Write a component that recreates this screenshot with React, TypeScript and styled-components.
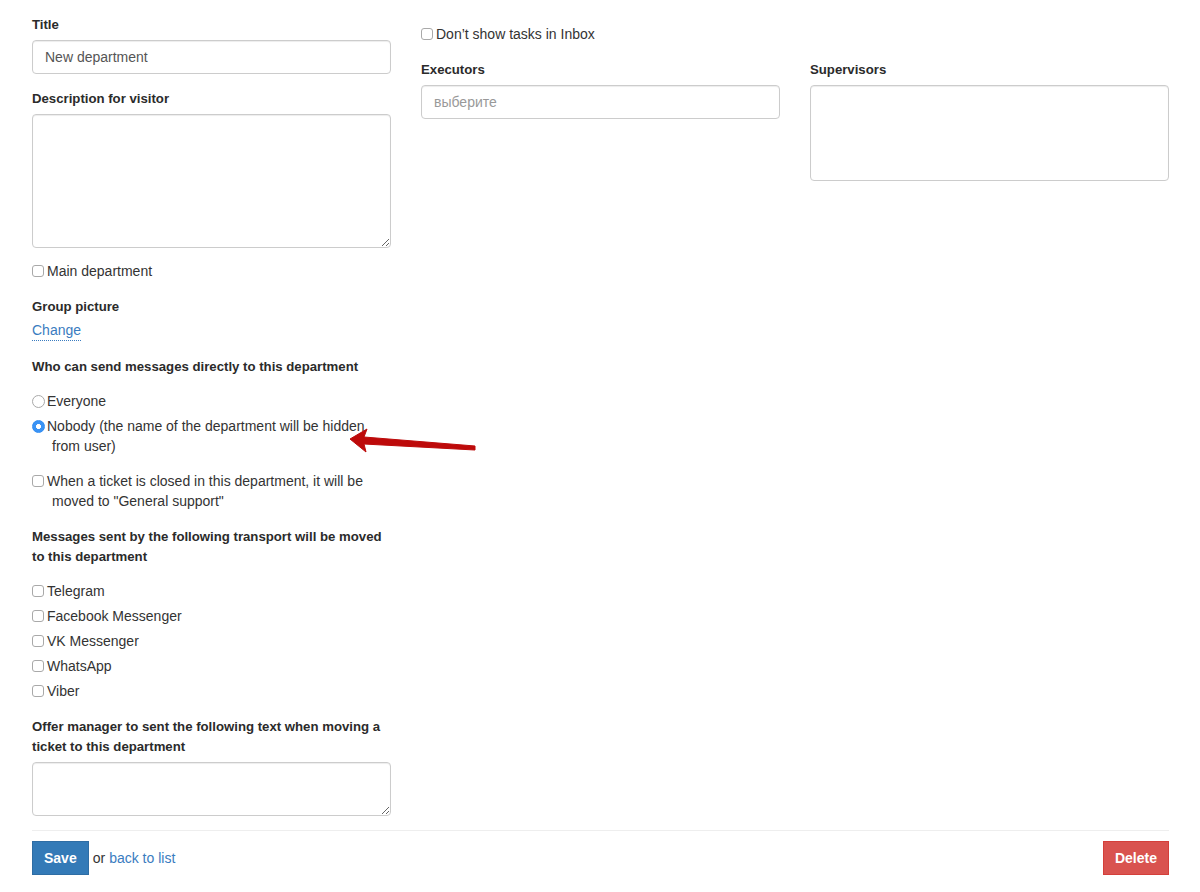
import React from "react";
import styled, { createGlobalStyle } from "styled-components";

const GlobalStyle = createGlobalStyle`
  * { box-sizing: border-box; }
  html, body { margin: 0; padding: 0; background: #fff; }
  body {
    font-family: "Liberation Sans", Arial, sans-serif;
    font-size: 14px;
    line-height: 20px;
    color: #333;
  }
`;

const Page = styled.div`
  position: relative;
  width: 1200px;
  padding: 14px 31px 16px 32px;
`;

const Columns = styled.div`
  display: grid;
  grid-template-columns: 359px 359px 359px;
  column-gap: 30px;
  align-items: start;
`;

const Column = styled.div<{ $top?: number }>`
  display: flex;
  flex-direction: column;
  padding-top: ${(p) => p.$top ?? 0}px;
`;

const Label = styled.div<{ $mb?: number }>`
  font-weight: bold;
  font-size: 13.2px;
  line-height: 20px;
  color: #2b2b2b;
  padding-top: 1px;
  margin-bottom: ${(p) => (p.$mb ?? 6) - 1}px;
`;

const Spacer = styled.div<{ $h: number }>`
  height: ${(p) => p.$h}px;
  flex: none;
`;

const TextInput = styled.input`
  display: block;
  width: 100%;
  height: 34px;
  padding: 6px 12px;
  font-family: "Liberation Sans", Arial, sans-serif;
  font-size: 14px;
  color: #555;
  border: 1px solid #ccc;
  border-radius: 4px;
  box-shadow: inset 0 1px 1px rgba(0, 0, 0, 0.075);
  outline: none;
  &::placeholder { color: #999; }
`;

const TextArea = styled.textarea<{ $h: number }>`
  display: block;
  width: 100%;
  height: ${(p) => p.$h}px;
  padding: 6px 12px;
  font-family: "Liberation Sans", Arial, sans-serif;
  font-size: 14px;
  color: #555;
  border: 1px solid #ccc;
  border-radius: 4px;
  box-shadow: inset 0 1px 1px rgba(0, 0, 0, 0.075);
  outline: none;
  resize: vertical;
`;

const SelectBox = styled.div<{ $h: number }>`
  width: 100%;
  height: ${(p) => p.$h}px;
  border: 1px solid #ccc;
  border-radius: 4px;
  box-shadow: inset 0 1px 1px rgba(0, 0, 0, 0.075);
`;

const OptionLabel = styled.label`
  display: block;
  padding-left: 20px;
  text-indent: -20px;
  line-height: 20px;
  font-size: 14px;
  color: #333;
  cursor: pointer;
`;

const Check = styled.input.attrs({ type: "checkbox" })`
  appearance: none;
  -webkit-appearance: none;
  display: inline-block;
  width: 12px;
  height: 12px;
  margin: 0 3px 0 0;
  border: 1px solid #a9a9a9;
  border-radius: 3px;
  background: #fff;
  vertical-align: -1px;
  text-indent: 0;
`;

const Radio = styled.input.attrs({ type: "radio" })`
  appearance: none;
  -webkit-appearance: none;
  display: inline-block;
  width: 13px;
  height: 13px;
  margin: 0 2px 0 0;
  border: 1px solid #a9a9a9;
  border-radius: 50%;
  background: #fff;
  vertical-align: -2px;
  &:checked {
    border-color: #2f8cf2;
    background: radial-gradient(circle, #fff 0 2.2px, #3a93f5 2.8px);
  }
`;

const ChangeLink = styled.a`
  align-self: flex-start;
  color: #3a7cc0;
  text-decoration: none;
  line-height: 19px;
  border-bottom: 1px dotted #3a7cc0;
  font-size: 14px;
`;

const Divider = styled.div`
  border-top: 1px solid #eee;
  margin-top: 14px;
`;

const Footer = styled.div`
  display: flex;
  align-items: center;
  justify-content: space-between;
  margin-top: 10px;
`;

const FooterLeft = styled.div`
  display: flex;
  align-items: center;
  gap: 4px;
`;

const Button = styled.button<{ $variant: "primary" | "danger" }>`
  height: 34px;
  padding: 6px 11px;
  font-family: "Liberation Sans", Arial, sans-serif;
  font-size: 14px;
  font-weight: bold;
  color: #fff;
  border-radius: 0;
  cursor: pointer;
  background: ${(p) => (p.$variant === "primary" ? "#337ab7" : "#d9534f")};
  border: 1px solid ${(p) => (p.$variant === "primary" ? "#2e6da4" : "#d43f3a")};
`;

const OrText = styled.span`
  color: #333;
  font-size: 14px;
`;

const BackLink = styled.a`
  color: #3a7cc0;
  text-decoration: none;
  font-size: 14px;
`;

const ArrowOverlay = styled.svg`
  position: absolute;
  left: 340px;
  top: 420px;
  pointer-events: none;
`;

const transports = ["Telegram", "Facebook Messenger", "VK Messenger", "WhatsApp", "Viber"];

export default function App() {
  return (
    <>
      <GlobalStyle />
      <Page>
        <Columns>
          <Column>
            <Label>Title</Label>
            <TextInput defaultValue="New department" />
            <Spacer $h={14} />
            <Label>Description for visitor</Label>
            <TextArea $h={134} />
            <Spacer $h={13} />
            <OptionLabel>
              <Check />Main department
            </OptionLabel>
            <Spacer $h={15} />
            <Label $mb={5}>Group picture</Label>
            <ChangeLink href="#">Change</ChangeLink>
            <Spacer $h={15} />
            <Label $mb={15}>Who can send messages directly to this department</Label>
            <OptionLabel>
              <Radio name="who" />Everyone
            </OptionLabel>
            <Spacer $h={5} />
            <OptionLabel>
              <Radio name="who" defaultChecked />Nobody (the name of the department will be hidden from user)
            </OptionLabel>
            <Spacer $h={15} />
            <OptionLabel>
              <Check />When a ticket is closed in this department, it will be moved to "General support"
            </OptionLabel>
            <Spacer $h={15} />
            <Label $mb={15}>Messages sent by the following transport will be moved to this department</Label>
            {transports.map((t, i) => (
              <React.Fragment key={t}>
                {i > 0 && <Spacer $h={5} />}
                <OptionLabel>
                  <Check />{t}
                </OptionLabel>
              </React.Fragment>
            ))}
            <Spacer $h={15} />
            <Label>Offer manager to sent the following text when moving a ticket to this department</Label>
            <TextArea $h={54} />
          </Column>
          <Column $top={10}>
            <OptionLabel>
              <Check />Don’t show tasks in Inbox
            </OptionLabel>
            <Spacer $h={15} />
            <Label>Executors</Label>
            <TextInput placeholder="выберите" />
          </Column>
          <Column $top={45}>
            <Label>Supervisors</Label>
            <SelectBox $h={96} />
          </Column>
        </Columns>
        <Divider />
        <Footer>
          <FooterLeft>
            <Button $variant="primary">Save</Button>
            <OrText>or</OrText>
            <BackLink href="#">back to list</BackLink>
          </FooterLeft>
          <Button $variant="danger">Delete</Button>
        </Footer>
        <ArrowOverlay width="140" height="40" viewBox="340 420 140 40">
          <polygon
            points="350,439 367,429 364,437 475,446 475,450 364,444 366,452"
            fill="#bd0a0a"
            stroke="#bd0a0a"
            strokeWidth="1"
            strokeLinejoin="round"
          />
        </ArrowOverlay>
      </Page>
    </>
  );
}
